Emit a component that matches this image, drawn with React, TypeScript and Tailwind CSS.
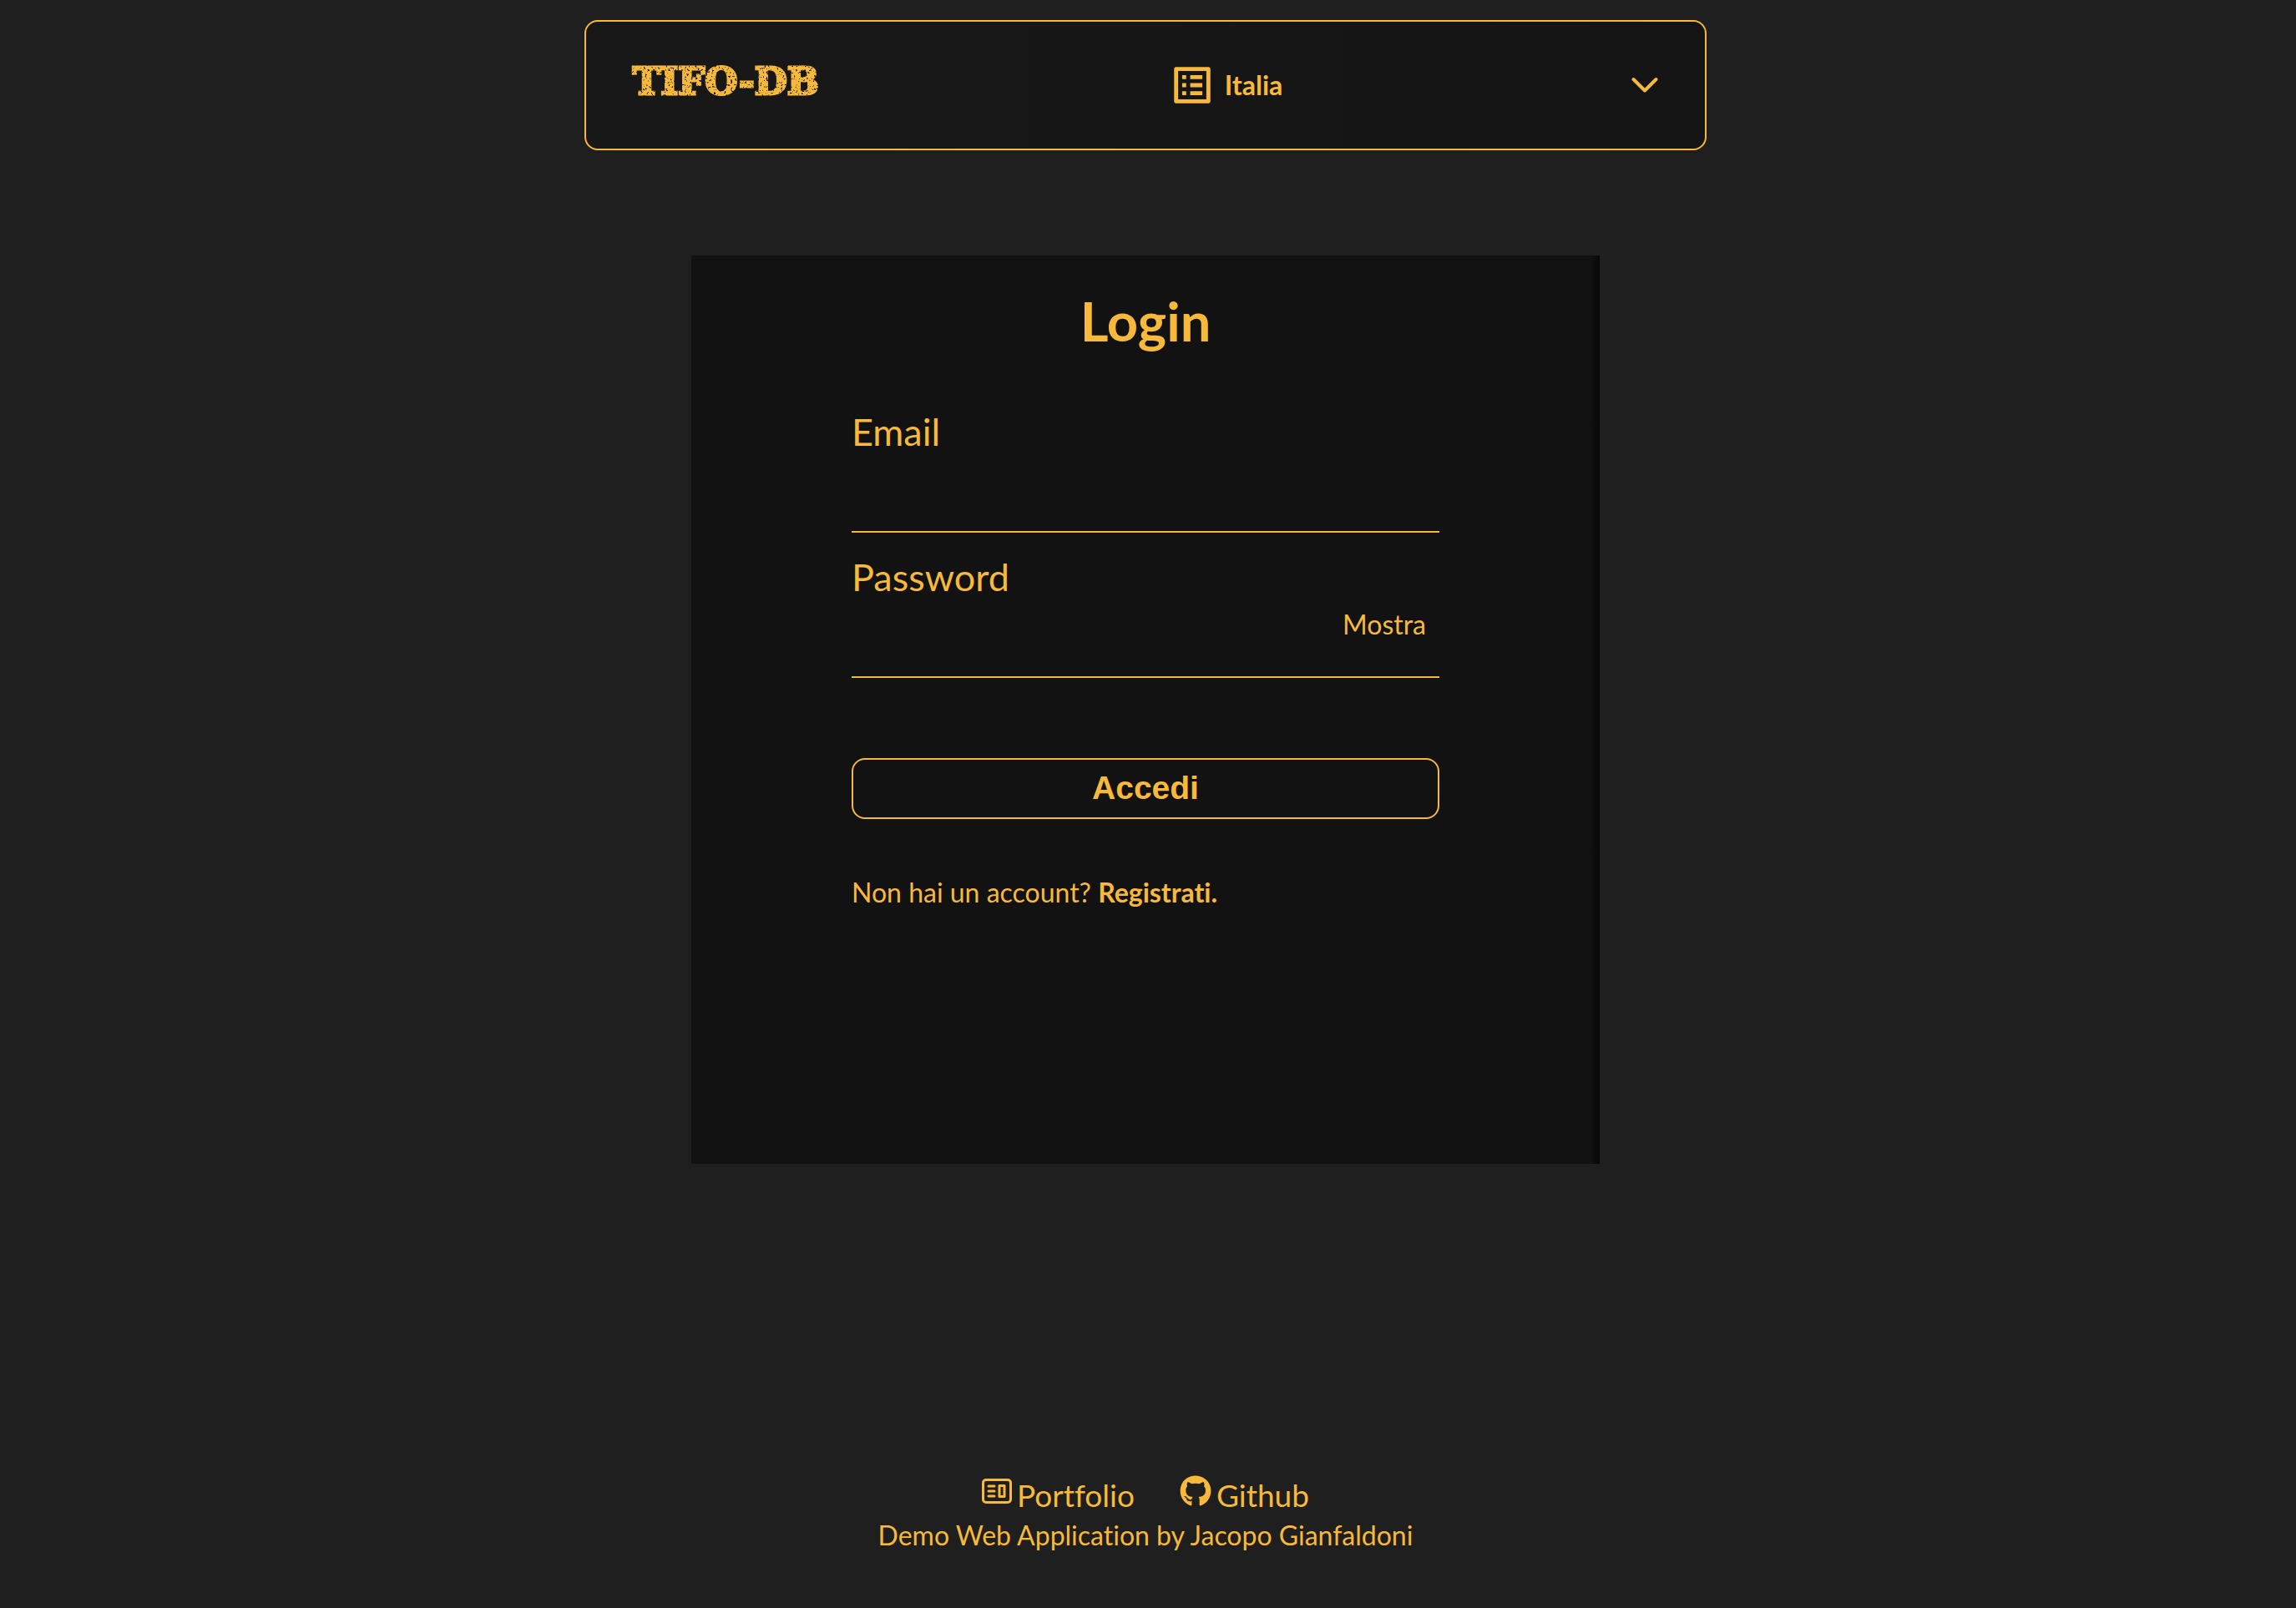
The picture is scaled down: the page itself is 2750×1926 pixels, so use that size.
import { useState } from "react";
import type { ReactNode } from "react";
import { MdListAlt } from "react-icons/md";
import { FaGithub } from "react-icons/fa";

function WornFilter() {
  return (
    <svg width="0" height="0" className="absolute" aria-hidden="true">
      <filter id="worn" x="-5%" y="0" width="110%" height="100%">
        <feTurbulence type="fractalNoise" baseFrequency="0.4" numOctaves="2" seed="11" result="noise" />
        <feColorMatrix in="noise" type="matrix" values="0 0 0 0 0  0 0 0 0 0  0 0 0 0 0  0 0 0 -8 5.8" result="mask" />
        <feComposite in="SourceGraphic" in2="mask" operator="in" />
      </filter>
    </svg>
  );
}

function NewsIcon() {
  return (
    <svg viewBox="0 0 36 30" className="h-[30px] w-9" fill="none" stroke="currentColor" strokeWidth="3" strokeLinecap="round" strokeLinejoin="round" aria-hidden="true">
      <rect x="1.500" y="1.500" width="33" height="27" rx="3.500" />
      <path d="M8 9h7M8 15h7M8 21h7" />
      <rect x="21" y="8.500" width="6" height="13" />
    </svg>
  );
}

function Header() {
  return (
    <header className="mx-auto flex h-[156px] w-[49%] items-center justify-between rounded-2xl border-2 border-[#f6b93b] bg-linear-to-r from-[#181818] to-[#141414] px-14">
      <a href="#" className="pb-2 font-['DejaVu_Serif',serif] text-[45px] leading-[54px] font-bold [-webkit-text-stroke:3px_#f6b93b] [filter:url(#worn)]">
        TIFO-DB
      </a>
      <button type="button" className="flex items-center gap-2.5 text-[32px] leading-10 font-bold">
        <MdListAlt className="size-[58px]" />
        Italia
      </button>
      <button type="button" aria-label="Apri menu">
        <svg viewBox="0 0 32 20" className="h-5 w-8" fill="none" stroke="currentColor" strokeWidth="4" strokeLinecap="round" strokeLinejoin="round">
          <path d="M2.500 3 16 16.500 29.500 3" />
        </svg>
      </button>
    </header>
  );
}

function Field({ id, label, type, children }: { id: string; label: string; type: string; children?: ReactNode }) {
  return (
    <div className="flex h-[174px] flex-col pt-[26px]">
      <label htmlFor={id} className="text-[45px] leading-[54px]">{label}</label>
      <div className="flex flex-1 items-start border-b-2 border-[#f6b93b]">
        <input id={id} name={id} type={type} className="h-full min-w-0 flex-1 bg-transparent text-[32px] outline-none" />
        {children}
      </div>
    </div>
  );
}

function LoginCard() {
  const [show, setShow] = useState(false);
  return (
    <main className="mx-auto mt-[126px] min-h-[1088px] w-full max-w-[1088px] bg-[linear-gradient(to_left,#070707,#121212_12px)] px-48">
      <h1 className="pt-[38px] text-center text-[65px] leading-[80px] font-bold">Login</h1>
      <form className="mt-10" onSubmit={(e) => e.preventDefault()}>
        <Field id="email" label="Email" type="email" />
        <Field id="password" label="Password" type={show ? "text" : "password"}>
          <button type="button" onClick={() => setShow(!show)} className="mt-2.5 mr-4 text-[32px] leading-10">
            {show ? "Nascondi" : "Mostra"}
          </button>
        </Field>
        <button type="submit" className="mt-24 block h-[73px] w-full rounded-2xl border-2 border-[#f6b93b] font-['Liberation_Sans',sans-serif] text-[39px] font-bold">
          Accedi
        </button>
      </form>
      <p className="mt-[68px] text-[32px] leading-10">
        Non hai un account? <a href="#" className="font-bold">Registrati.</a>
      </p>
    </main>
  );
}

function Footer() {
  return (
    <footer className="mt-auto pb-[67px] text-center">
      <nav className="flex h-12 items-center justify-center gap-[54px] text-[37px] leading-[48px]">
        <a href="#" className="flex items-center gap-1.5">
          <span className="pb-2.5"><NewsIcon /></span>
          Portfolio
        </a>
        <a href="#" className="flex items-center gap-1.5">
          <span className="pb-2.5"><FaGithub className="size-[38px]" /></span>
          Github
        </a>
      </nav>
      <p className="mt-1 text-[32px] leading-10">Demo Web Application by Jacopo Gianfaldoni</p>
    </footer>
  );
}

export default function App() {
  return (
    <div className="flex min-h-screen flex-col bg-[#1f1f1f] pt-6 pr-1.5 font-['Lato',sans-serif] text-[#f6b93b] [font-variant-ligatures:none]">
      <WornFilter />
      <Header />
      <LoginCard />
      <Footer />
    </div>
  );
}
